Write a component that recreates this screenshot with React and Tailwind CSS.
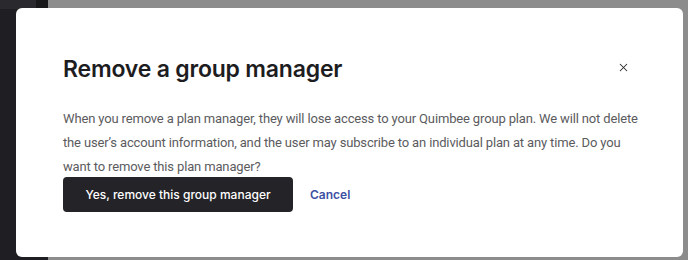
import { X } from 'lucide-react';

export default function App() {
  return (
    <div className="relative w-[688px] h-[260px] overflow-hidden bg-[#8c8c8c] font-['Inter',sans-serif]">
      <div className="absolute left-0 top-0 w-[48px] h-full bg-[#1f1f23]">
        <div className="flex h-[9px]">
          <div className="w-[36px] bg-[#2a2a2e]" />
          <div className="w-[12px] bg-[#18181b]" />
        </div>
      </div>

      <div className="absolute left-[16px] top-[8px] w-[667px] h-[249px] bg-white rounded-[6px] pl-[47px] pr-[38px] pt-[47px]">
        <div className="flex items-center justify-between">
          <h1 className="text-[23px] leading-[28px] font-semibold text-[#1d1d1f] tracking-[-0.2px]">
            Remove a group manager
          </h1>
          <button className="text-[#2a2a2a] -mt-[4px] mr-[15px]">
            <X size={13} strokeWidth={1.9} />
          </button>
        </div>
        <p className="mt-[24px] mb-[-2px] font-['Roboto',sans-serif] text-[13px] leading-[24px] tracking-[-0.15px] text-[#5b5b5e]">
          When you remove a plan manager, they will lose access to your Quimbee group plan. We will not delete
          <br />
          the user’s account information, and the user may subscribe to an individual plan at any time. Do you
          <br />
          want to remove this plan manager?
        </p>
        <div className="flex items-center gap-[17px]">
          <button className="w-[230px] h-[35px] rounded-[4px] bg-[#242428] text-white text-[12px] font-medium">
            Yes, remove this group manager
          </button>
          <button className="text-[12px] font-semibold text-[#3d50a3]">Cancel</button>
        </div>
      </div>
    </div>
  );
}
